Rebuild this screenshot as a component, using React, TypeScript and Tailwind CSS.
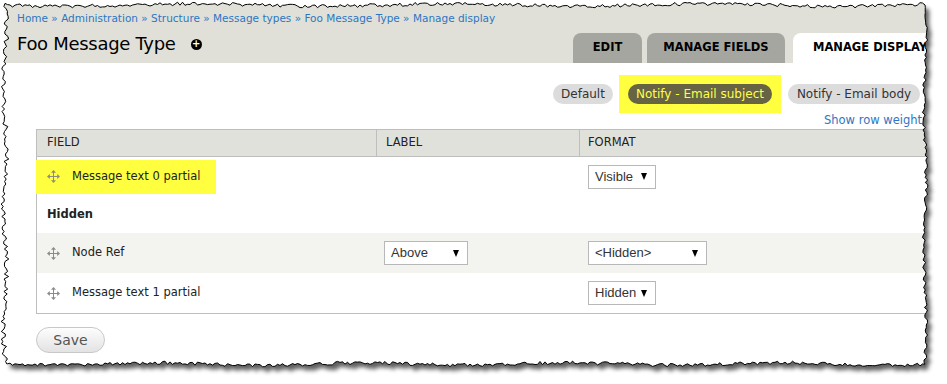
import React from 'react';

// torn paper frame around the screenshot
function seeded(seed: number) {
  let s = seed;
  return () => {
    s = (s * 16807) % 2147483647;
    return s / 2147483647;
  };
}

function tornPath() {
  const r = seeded(1234);
  const pts: [number, number][] = [];
  const L = 5, T = 5, R = 925, B = 364;
  for (let x = L; x < R; x += 2.5) pts.push([x, T + (r() - 0.5) * 3.5 + Math.sin(x / 41) * 1.2]);
  for (let y = T; y < B; y += 2.5) pts.push([R + (r() - 0.5) * 3.5 + Math.sin(y / 23) * 1.2, y]);
  for (let x = R; x > L; x -= 2.5) pts.push([x, B + (r() - 0.5) * 3.5 + Math.sin(x / 33) * 1.2]);
  for (let y = B; y > T; y -= 2.5) pts.push([L + (r() - 0.5) * 5 + Math.sin(y / 19) * 1.5, y]);
  return 'M' + pts.map(p => `${p[0].toFixed(1)},${p[1].toFixed(1)}`).join('L') + 'Z';
}

function TornFrame() {
  const p = tornPath();
  const outside = `M0,0H947V384H0Z ${p}`;
  return (
    <svg className="pointer-events-none absolute inset-0" width={947} height={384}>
      <defs>
        <clipPath id="outside">
          <path d={outside} clipRule="evenodd" />
        </clipPath>
        <filter id="soft" x="-5%" y="-5%" width="110%" height="110%">
          <feGaussianBlur stdDeviation="2" />
        </filter>
      </defs>
      <path d={outside} fill="#fff" fillRule="evenodd" />
      <g clipPath="url(#outside)">
        <path d={p} fill="#444" opacity={0.85} filter="url(#soft)" transform="translate(4,5)" />
      </g>
      <path d={p} fill="none" stroke="#000" strokeWidth={1} />
    </svg>
  );
}

function DragIcon() {
  return (
    <svg width="13" height="13" viewBox="0 0 13 13" className="shrink-0">
      <g stroke="#8c8c84" strokeWidth="1">
        <line x1="6.5" y1="2" x2="6.5" y2="11" />
        <line x1="2" y1="6.5" x2="11" y2="6.5" />
      </g>
      <g fill="#8c8c84">
        <path d="M6.5 0 L9 2.8 H4 Z" />
        <path d="M6.5 13 L9 10.2 H4 Z" />
        <path d="M0 6.5 L2.8 4 V9 Z" />
        <path d="M13 6.5 L10.2 4 V9 Z" />
      </g>
    </svg>
  );
}

function Select({ value, width }: { value: string; width: string }) {
  return (
    <div
      className={`flex h-[24px] ${width} items-center justify-between border border-[#b8b8b8] bg-white pl-[6px] pr-[8px] font-['Liberation_Sans',Arial,sans-serif] text-[13px] text-[#333]`}
    >
      <span>{value}</span>
      <svg width="6" height="7" viewBox="0 0 6 7">
        <path d="M0 0 H6 L3 7 Z" fill="#000" />
      </svg>
    </div>
  );
}

const CRUMBS = ['Home', 'Administration', 'Structure', 'Message types', 'Foo Message Type', 'Manage display'];

export default function App() {
  return (
    <div className="relative h-[384px] w-[947px] overflow-hidden bg-white font-['DejaVu_Sans',Verdana,sans-serif] text-[#222]">
      {/* header */}
      <div className="flex h-[63px] bg-[#e0e0d8]">
        <div className="w-[573px] shrink-0 pl-[17px] pt-[11px]">
          <nav className="text-[10.5px] leading-[14px] text-[#2e76c2]">
            {CRUMBS.map((c, i) => (
              <span key={c}>
                {i > 0 && <span> » </span>}
                {c}
              </span>
            ))}
          </nav>
          <div className="mt-[8px] flex items-center">
            <h1 className="text-[18px] leading-[22px] tracking-[-0.3px] text-black">Foo Message Type</h1>
            <span className="ml-[15px] flex h-[11px] w-[11px] items-center justify-center rounded-full bg-black text-[10px] font-bold leading-none text-white">
              +
            </span>
          </div>
        </div>
        <div className="flex items-end text-[11.5px] font-bold">
          <div className="flex h-[30px] w-[69px] items-center justify-center rounded-t-[8px] bg-[#a6a6a0] text-black">EDIT</div>
          <div className="ml-[5px] flex h-[30px] w-[138px] items-center justify-center rounded-t-[8px] bg-[#a6a6a0] text-black">
            MANAGE FIELDS
          </div>
          <div className="ml-[8px] flex h-[30px] w-[150px] items-center rounded-t-[8px] bg-white pl-[20px] text-black">
            MANAGE DISPLAY
          </div>
        </div>
      </div>

      {/* display mode tabs */}
      <div className="mt-[12px] flex items-center justify-end pr-[27px] text-[12px]">
        <div className="flex h-[20px] w-[60px] items-center justify-center rounded-[10px] bg-[#dcdcdc] text-[#333]">Default</div>
        <div className="ml-[6px] bg-[#ffff40] px-[9px] py-[9px]">
          <div className="flex h-[20px] w-[144px] items-center justify-center rounded-[10px] bg-[#666442] text-[#ffff4a]">
            Notify - Email subject
          </div>
        </div>
        <div className="ml-[7px] flex h-[20px] w-[132px] items-center justify-center rounded-[10px] bg-[#dcdcdc] text-[#333]">
          Notify - Email body
        </div>
      </div>
      <div className="flex justify-end pr-[19px] text-[11.5px] leading-[14px] text-[#2e76c2]">Show row weights</div>

      {/* fields table */}
      <div className="ml-[36px] mt-[2px] w-[911px] border-b border-l border-t border-[#bebebe] text-[11.5px]">
        <div className="flex h-[27px] border-b border-[#bebebe] bg-[#e1e1db] uppercase text-[#222]">
          <div className="flex w-[339px] items-center pl-[10px]">Field</div>
          <div className="flex w-[203px] items-center border-l border-[#bebebe] pl-[9px]">Label</div>
          <div className="flex flex-1 items-center border-l border-[#bebebe] pl-[8px]">Format</div>
        </div>

        <div className="flex h-[39px] items-center">
          <div className="w-[339px]">
            <div className="-ml-[1px] flex h-[34px] w-[180px] items-center bg-[#ffff40] pl-[11px]">
              <DragIcon />
              <span className="ml-[12px]">Message text 0 partial</span>
            </div>
          </div>
          <div className="w-[203px]" />
          <div className="flex-1 pl-[9px]">
            <Select value="Visible" width="w-[68px]" />
          </div>
        </div>

        <div className="flex h-[37px] items-center pl-[10px] font-bold">Hidden</div>

        <div className="flex h-[40px] items-center bg-[#f3f3ef]">
          <div className="flex w-[339px] items-center pl-[10px]">
            <DragIcon />
            <span className="ml-[12px]">Node Ref</span>
          </div>
          <div className="w-[203px] pl-[8px]">
            <Select value="Above" width="w-[84px]" />
          </div>
          <div className="flex-1 pl-[9px]">
            <Select value="<Hidden>" width="w-[119px]" />
          </div>
        </div>

        <div className="flex h-[40px] items-center">
          <div className="flex w-[339px] items-center pl-[10px]">
            <DragIcon />
            <span className="ml-[12px]">Message text 1 partial</span>
          </div>
          <div className="w-[203px]" />
          <div className="flex-1 pl-[9px]">
            <Select value="Hidden" width="w-[68px]" />
          </div>
        </div>
      </div>

      <div className="ml-[36px] mt-[13px]">
        <button className="h-[26px] w-[69px] rounded-[13px] border border-[#c8c8c8] bg-gradient-to-b from-[#fdfdfd] to-[#e3e3e3] text-[14px] text-[#555]">
          Save
        </button>
      </div>

      <TornFrame />
    </div>
  );
}
